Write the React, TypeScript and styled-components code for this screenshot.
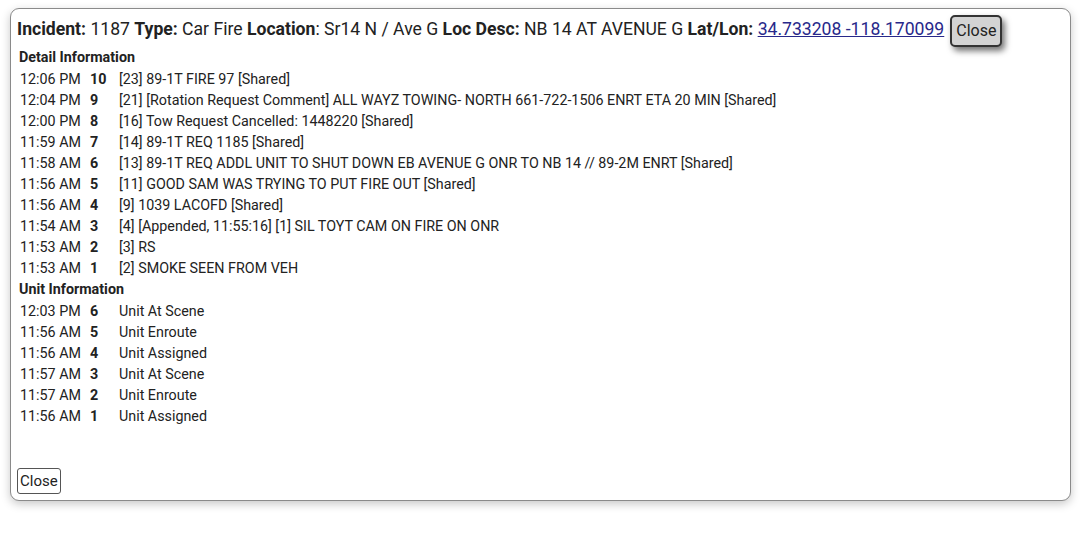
import React, { FC } from 'react'
import styled, { createGlobalStyle } from 'styled-components'

const GlobalStyle = createGlobalStyle`
    html, body {
        margin: 0;
        padding: 0;
        background: #fff;
    }
    body {
        font-family: Roboto, "Liberation Sans", sans-serif;
        color: #222;
    }
`

//CSS
const Page = styled.div`
    padding: 8px 9px 0 10px;
    width: 1080px;
    height: 538px;
    box-sizing: border-box;
`
const Panel = styled.section`
    display: flex;
    flex-direction: column;
    height: 493px;
    box-sizing: border-box;
    border: 1px solid #8a8a8a;
    border-radius: 9px;
    box-shadow: 0 3px 10px rgba(0, 0, 0, 0.22);
    padding: 3px 8px 6px 6px;
    background: #fff;
`
const Header = styled.div`
    display: flex;
    align-items: center;
    gap: 6px;
    font-size: 17.6px;
    line-height: 32px;
    height: 34px;
    white-space: nowrap;
`
const Label = styled.b`
    font-weight: 700;
`
const Coords = styled.a`
    color: #28288a;
    text-decoration: underline;
`
const HeaderClose = styled.button`
    font-family: Roboto, "Liberation Sans", sans-serif;
    font-size: 16px;
    color: #222;
    height: 32px;
    padding: 0 4px;
    margin-top: 3px;
    background: #d3d3d3;
    border: 2px solid #333;
    border-radius: 5px;
    box-shadow: 3px 4px 6px rgba(0, 0, 0, 0.55);
    cursor: pointer;
`
const SectionTitle = styled.div<{ $first?: boolean }>`
    font-size: 14.3px;
    font-weight: 700;
    line-height: 21px;
    margin: ${p => (p.$first ? '1px' : '0')} 0 0 2px;
`
const Rows = styled.div`
    display: grid;
    grid-template-columns: 70px 29px auto;
    grid-auto-rows: 21px;
    margin: 1px 0 0 3px;
    font-size: 14.3px;
    line-height: 21px;
`
const Time = styled.span``
const Num = styled.span`
    font-weight: 700;
`
const Text = styled.span`
    white-space: nowrap;
`
const BottomClose = styled.button`
    align-self: flex-start;
    margin: auto 0 0 0;
    font-family: Roboto, "Liberation Sans", sans-serif;
    font-size: 15px;
    color: #222;
    height: 26px;
    padding: 0 2px;
    background: #fff;
    border: 1px solid #555;
    border-radius: 3px;
    cursor: pointer;
`

//TypeScript
type Entry = {
    time: string
    num: number
    text: string
}

const details: Entry[] = [
    { time: '12:06 PM', num: 10, text: '[23] 89-1T FIRE 97 [Shared]' },
    { time: '12:04 PM', num: 9, text: '[21] [Rotation Request Comment] ALL WAYZ TOWING- NORTH 661-722-1506 ENRT ETA 20 MIN [Shared]' },
    { time: '12:00 PM', num: 8, text: '[16] Tow Request Cancelled: 1448220 [Shared]' },
    { time: '11:59 AM', num: 7, text: '[14] 89-1T REQ 1185 [Shared]' },
    { time: '11:58 AM', num: 6, text: '[13] 89-1T REQ ADDL UNIT TO SHUT DOWN EB AVENUE G ONR TO NB 14 // 89-2M ENRT [Shared]' },
    { time: '11:56 AM', num: 5, text: '[11] GOOD SAM WAS TRYING TO PUT FIRE OUT [Shared]' },
    { time: '11:56 AM', num: 4, text: '[9] 1039 LACOFD [Shared]' },
    { time: '11:54 AM', num: 3, text: '[4] [Appended, 11:55:16] [1] SIL TOYT CAM ON FIRE ON ONR' },
    { time: '11:53 AM', num: 2, text: '[3] RS' },
    { time: '11:53 AM', num: 1, text: '[2] SMOKE SEEN FROM VEH' },
]

const units: Entry[] = [
    { time: '12:03 PM', num: 6, text: 'Unit At Scene' },
    { time: '11:56 AM', num: 5, text: 'Unit Enroute' },
    { time: '11:56 AM', num: 4, text: 'Unit Assigned' },
    { time: '11:57 AM', num: 3, text: 'Unit At Scene' },
    { time: '11:57 AM', num: 2, text: 'Unit Enroute' },
    { time: '11:56 AM', num: 1, text: 'Unit Assigned' },
]

const EntryList: FC<{ entries: Entry[] }> = ({ entries }) => (
    <Rows>
        {entries.map((e, i) => (
            <React.Fragment key={i}>
                <Time>{e.time}</Time>
                <Num>{e.num}</Num>
                <Text>{e.text}</Text>
            </React.Fragment>
        ))}
    </Rows>
)

const App: FC = () => {
    return (
        <React.Fragment>
            <GlobalStyle />
            <Page>
                <Panel>
                    <Header>
                        <span>
                            <Label>Incident:</Label> 1187 <Label>Type:</Label> Car Fire{' '}
                            <Label>Location</Label>: Sr14 N / Ave G <Label>Loc Desc:</Label> NB 14 AT AVENUE G{' '}
                            <Label>Lat/Lon:</Label> <Coords href="#">34.733208 -118.170099</Coords>
                        </span>
                        <HeaderClose>Close</HeaderClose>
                    </Header>
                    <SectionTitle $first>Detail Information</SectionTitle>
                    <EntryList entries={details} />
                    <SectionTitle>Unit Information</SectionTitle>
                    <EntryList entries={units} />
                    <BottomClose>Close</BottomClose>
                </Panel>
            </Page>
        </React.Fragment>
    )
}
export default App
